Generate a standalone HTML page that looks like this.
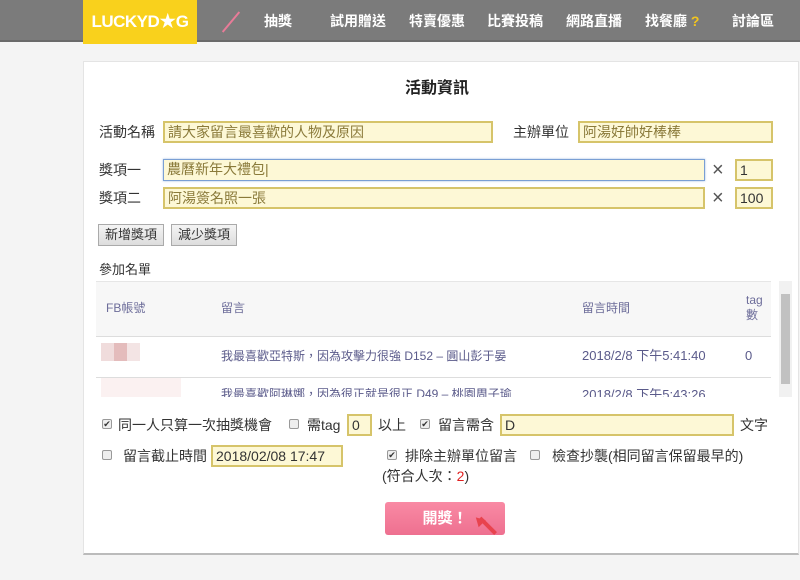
<!DOCTYPE html>
<html><head><meta charset="utf-8"><style>
*{box-sizing:border-box;margin:0;padding:0}
body{width:800px;height:580px;background:#f4f4f4;font-family:"Liberation Sans","Noto Sans CJK TC",sans-serif;font-size:14px;color:#333;position:relative;overflow:hidden;line-height:1}
.a{position:absolute}
.bar{left:0;top:0;width:800px;height:42px;background:#7b7b7b;border-bottom:2px solid #6a6a6a}
.logo{left:83px;top:0;width:114px;height:44px;background:#f9d11c;color:#fff;font-weight:bold;font-size:17px;line-height:44px;text-align:center;letter-spacing:-0.5px}
.nav{color:#fff;font-size:14px;top:14px;font-weight:bold}
.card{left:83px;top:61px;width:716px;height:494px;background:#fff;border:1px solid #e4e4e4;border-bottom:2px solid #bbb}
.in{background:#fdf8d6;border:2px solid #d6c46a;height:22px;font-size:14px;color:#8a7a3a;line-height:18px;padding-left:3px}
.lbl{font-size:14px;color:#333;line-height:16px}
.btn{background:linear-gradient(#f4f4f4,#ddd);border:1px solid #aaa;height:22px;font-size:13px;line-height:20px;padding:0 6px}
.th{color:#6d6d9a;font-size:12px}
.td{color:#5a5a8a;font-size:12px}
.cb{width:10px;height:10px;border:1px solid #999;background:#eee;border-radius:2px;font-size:9px;line-height:8px;text-align:center;color:#333}
.x{font-size:20px;color:#555;font-weight:normal}
</style></head><body>
<div class="a bar"></div>
<div class="a logo">LUCKYD★G</div>
<div class="a" style="left:218px;top:21px;width:26px;height:2px;background:#e87b98;transform:rotate(-50deg)"></div>
<div class="a nav" style="left:264px">抽獎</div>
<div class="a nav" style="left:330px">試用贈送</div>
<div class="a nav" style="left:409px">特賣優惠</div>
<div class="a nav" style="left:487px">比賽投稿</div>
<div class="a nav" style="left:566px">網路直播</div>
<div class="a nav" style="left:645px">找餐廳<span style="color:#f3c51d"> ?</span></div>
<div class="a nav" style="left:732px">討論區</div>
<div class="a card"></div>
<div class="a" style="left:405px;top:81px;font-size:16px;font-weight:bold;color:#222">活動資訊</div>
<div class="a lbl" style="left:99px;top:124px">活動名稱</div>
<div class="a in" style="left:163px;top:121px;width:330px">請大家留言最喜歡的人物及原因</div>
<div class="a lbl" style="left:513px;top:124px">主辦單位</div>
<div class="a in" style="left:578px;top:121px;width:195px">阿湯好帥好棒棒</div>
<div class="a lbl" style="left:99px;top:162px">獎項一</div>
<div class="a in" style="left:163px;top:159px;width:542px;border:1px solid #7a9fd4;box-shadow:0 0 2px #9ab8e0">農曆新年大禮包|</div>
<div class="a x" style="left:712px;top:160px">×</div>
<div class="a in" style="left:735px;top:159px;width:38px;color:#333">1</div>
<div class="a lbl" style="left:99px;top:190px">獎項二</div>
<div class="a in" style="left:163px;top:187px;width:542px">阿湯簽名照一張</div>
<div class="a x" style="left:712px;top:188px">×</div>
<div class="a in" style="left:735px;top:187px;width:38px;color:#333">100</div>
<div class="a btn" style="left:98px;top:224px">新增獎項</div>
<div class="a btn" style="left:171px;top:224px">減少獎項</div>
<div class="a lbl" style="left:99px;top:262px;font-size:13px">參加名單</div>
<div class="a" style="left:96px;top:281px;width:675px;height:56px;background:#f7f7f7;border-top:1px solid #e6e6e6;border-bottom:1px solid #ddd"></div>
<div class="a th" style="left:106px;top:302px">FB帳號</div>
<div class="a th" style="left:221px;top:302px">留言</div>
<div class="a th" style="left:582px;top:302px">留言時間</div>
<div class="a th" style="left:746px;top:293px;line-height:15px">tag<br>數</div>
<div class="a" style="left:101px;top:343px;width:13px;height:18px;background:#f0dcdc"></div>
<div class="a" style="left:114px;top:343px;width:13px;height:18px;background:#e4bcbc"></div>
<div class="a" style="left:127px;top:343px;width:13px;height:18px;background:#f3e4e4"></div>
<div class="a td" style="left:221px;top:350px">我最喜歡亞特斯，因為攻擊力很強 D152 – 圓山彭于晏</div>
<div class="a td" style="left:582px;top:349px;font-size:13px">2018/2/8 下午5:41:40</div>
<div class="a td" style="left:745px;top:349px;font-size:13px">0</div>
<div class="a" style="left:96px;top:377px;width:675px;height:1px;background:#ddd"></div>
<div class="a" style="left:101px;top:378px;width:80px;height:19px;background:#fbf1f1"></div>
<div class="a td" style="left:221px;top:388px;height:9px;overflow:hidden">我最喜歡阿琳娜，因為很正就是很正 D49 – 桃園周子瑜</div>
<div class="a td" style="left:582px;top:388px;font-size:13px;height:9px;overflow:hidden">2018/2/8 下午5:43:26</div>
<div class="a" style="left:779px;top:281px;width:13px;height:116px;background:#f1f1f1"></div>
<div class="a" style="left:781px;top:294px;width:9px;height:90px;background:#c1c1c1"></div>
<div class="a" style="left:102px;top:419px" ><div class="cb">✔</div></div>
<div class="a lbl" style="left:118px;top:417px">同一人只算一次抽獎機會</div>
<div class="a" style="left:289px;top:419px"><div class="cb"></div></div>
<div class="a lbl" style="left:307px;top:417px">需tag</div>
<div class="a in" style="left:347px;top:414px;width:25px;color:#333">0</div>
<div class="a lbl" style="left:378px;top:417px">以上</div>
<div class="a" style="left:420px;top:419px"><div class="cb">✔</div></div>
<div class="a lbl" style="left:438px;top:417px">留言需含</div>
<div class="a in" style="left:500px;top:414px;width:234px;color:#333">D</div>
<div class="a lbl" style="left:740px;top:417px">文字</div>
<div class="a" style="left:102px;top:450px"><div class="cb"></div></div>
<div class="a lbl" style="left:123px;top:448px">留言截止時間</div>
<div class="a in" style="left:211px;top:445px;width:132px;color:#333">2018/02/08 17:47</div>
<div class="a" style="left:387px;top:450px"><div class="cb">✔</div></div>
<div class="a lbl" style="left:405px;top:448px">排除主辦單位留言</div>
<div class="a" style="left:530px;top:450px"><div class="cb"></div></div>
<div class="a lbl" style="left:552px;top:448px">檢查抄襲(相同留言保留最早的)</div>
<div class="a lbl" style="left:382px;top:468px">(符合人次：<span style="color:#e02020">2</span>)</div>
<div class="a" style="left:385px;top:502px;width:120px;height:33px;background:linear-gradient(#f98aa4,#ee7090);border-radius:3px;color:#fff;font-weight:bold;font-size:15px;text-align:center;line-height:33px">開獎！</div>
<div class="a" style="left:478px;top:518px;width:4px;height:22px;background:#e8434e;transform:rotate(-45deg);transform-origin:top"></div>
<div class="a" style="left:474px;top:516px;width:0;height:0;border-left:5px solid transparent;border-right:5px solid transparent;border-bottom:9px solid #e8434e;transform:rotate(-45deg)"></div>
</body></html>
